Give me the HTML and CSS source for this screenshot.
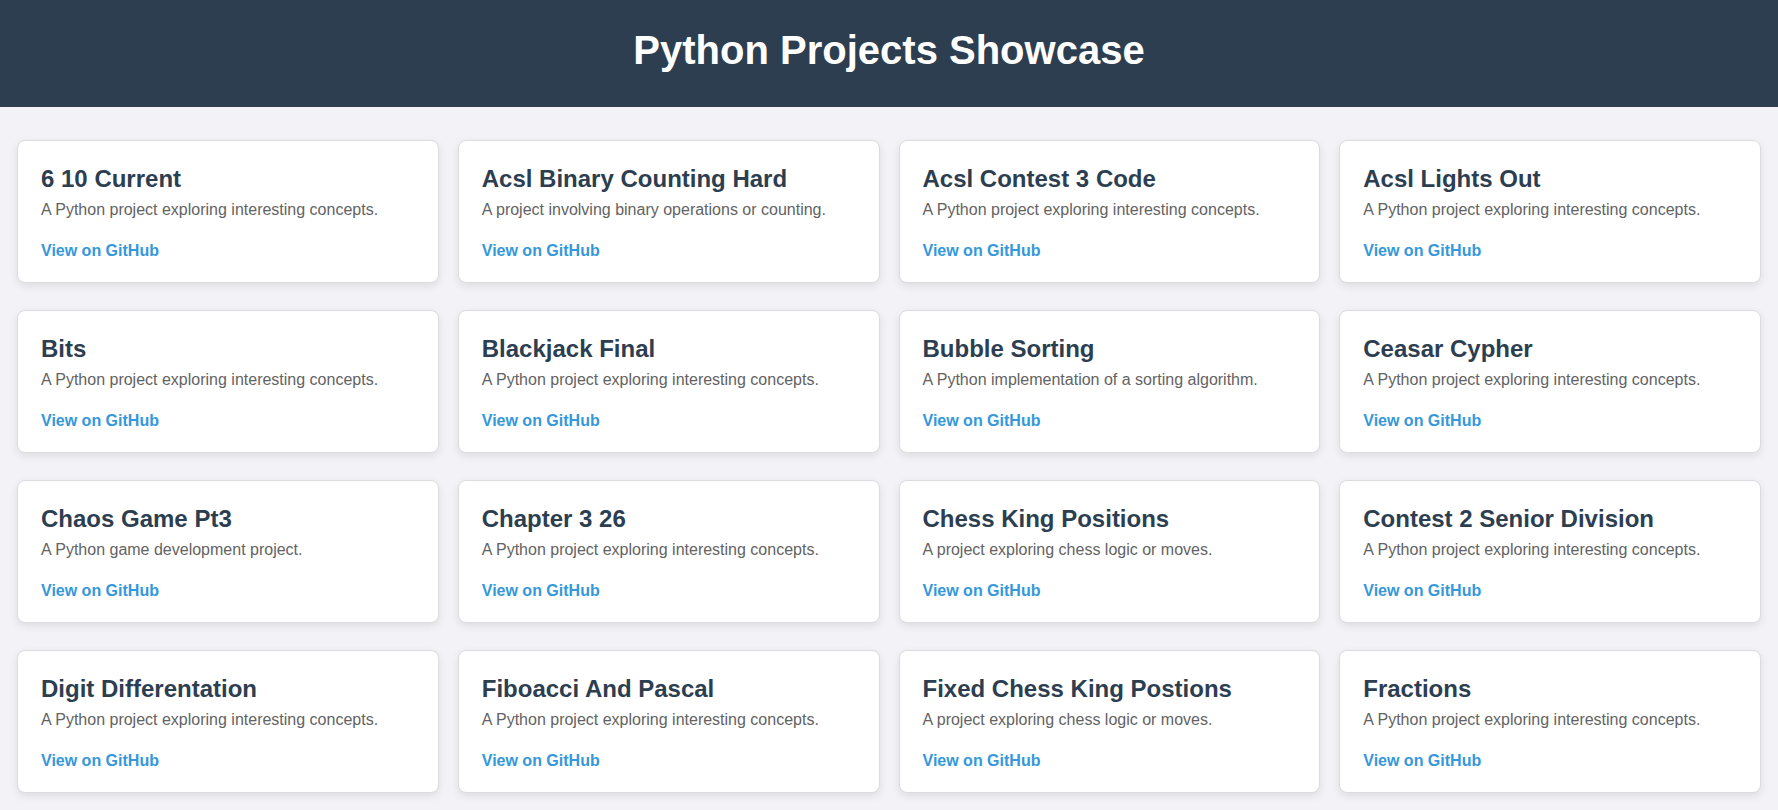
FILE: index.html
```html
<!DOCTYPE html>
<html lang="en">
<head>
<meta charset="utf-8">
<title>Python Projects Showcase</title>
<link rel="stylesheet" href="styles.css">
</head>
<body>
<header class="site-header">
  <h1 class="site-title">Python Projects Showcase</h1>
</header>
<main class="projects">
  <div class="card"><h3 class="card-title">6 10 Current</h3><p class="card-desc">A Python project exploring interesting concepts.</p><a class="card-link" href="#">View on GitHub</a></div>
  <div class="card"><h3 class="card-title">Acsl Binary Counting Hard</h3><p class="card-desc">A project involving binary operations or counting.</p><a class="card-link" href="#">View on GitHub</a></div>
  <div class="card"><h3 class="card-title">Acsl Contest 3 Code</h3><p class="card-desc">A Python project exploring interesting concepts.</p><a class="card-link" href="#">View on GitHub</a></div>
  <div class="card"><h3 class="card-title">Acsl Lights Out</h3><p class="card-desc">A Python project exploring interesting concepts.</p><a class="card-link" href="#">View on GitHub</a></div>
  <div class="card"><h3 class="card-title">Bits</h3><p class="card-desc">A Python project exploring interesting concepts.</p><a class="card-link" href="#">View on GitHub</a></div>
  <div class="card"><h3 class="card-title">Blackjack Final</h3><p class="card-desc">A Python project exploring interesting concepts.</p><a class="card-link" href="#">View on GitHub</a></div>
  <div class="card"><h3 class="card-title">Bubble Sorting</h3><p class="card-desc">A Python implementation of a sorting algorithm.</p><a class="card-link" href="#">View on GitHub</a></div>
  <div class="card"><h3 class="card-title">Ceasar Cypher</h3><p class="card-desc">A Python project exploring interesting concepts.</p><a class="card-link" href="#">View on GitHub</a></div>
  <div class="card"><h3 class="card-title">Chaos Game Pt3</h3><p class="card-desc">A Python game development project.</p><a class="card-link" href="#">View on GitHub</a></div>
  <div class="card"><h3 class="card-title">Chapter 3 26</h3><p class="card-desc">A Python project exploring interesting concepts.</p><a class="card-link" href="#">View on GitHub</a></div>
  <div class="card"><h3 class="card-title">Chess King Positions</h3><p class="card-desc">A project exploring chess logic or moves.</p><a class="card-link" href="#">View on GitHub</a></div>
  <div class="card"><h3 class="card-title">Contest 2 Senior Division</h3><p class="card-desc">A Python project exploring interesting concepts.</p><a class="card-link" href="#">View on GitHub</a></div>
  <div class="card"><h3 class="card-title">Digit Differentation</h3><p class="card-desc">A Python project exploring interesting concepts.</p><a class="card-link" href="#">View on GitHub</a></div>
  <div class="card"><h3 class="card-title">Fiboacci And Pascal</h3><p class="card-desc">A Python project exploring interesting concepts.</p><a class="card-link" href="#">View on GitHub</a></div>
  <div class="card"><h3 class="card-title">Fixed Chess King Postions</h3><p class="card-desc">A project exploring chess logic or moves.</p><a class="card-link" href="#">View on GitHub</a></div>
  <div class="card"><h3 class="card-title">Fractions</h3><p class="card-desc">A Python project exploring interesting concepts.</p><a class="card-link" href="#">View on GitHub</a></div>
</main>
</body>
</html>
```
FILE: styles.css
```css
html, body {
  margin: 0;
  padding: 0;
}
body {
  font-family: "Liberation Sans", Arial, sans-serif;
  background: #f3f3f7;
  color: #333;
}
.site-header {
  background: #2c3e50;
  height: 107px;
  display: flex;
  align-items: center;
  justify-content: center;
}
.site-title {
  margin: 0;
  color: #ffffff;
  font-size: 40px;
  font-weight: bold;
  position: relative;
  top: -3px;
}
.projects {
  display: grid;
  grid-template-columns: repeat(4, 1fr);
  column-gap: 19px;
  row-gap: 27px;
  padding: 33px 17px 20px;
}
.card {
  background: #ffffff;
  border: 1px solid #dcdce0;
  border-radius: 8px;
  box-shadow: 0 3px 9px rgba(0, 0, 0, 0.09);
  padding: 24px 23px 22px;
}
.card-title {
  margin: 0 0 8px;
  font-size: 24px;
  font-weight: bold;
  color: #2c3e50;
}
.card-desc {
  margin: 0 0 23px;
  font-size: 16px;
  color: #636363;
}
.card-link {
  display: block;
  font-size: 16px;
  font-weight: bold;
  color: #3498db;
  text-decoration: none;
}
```
